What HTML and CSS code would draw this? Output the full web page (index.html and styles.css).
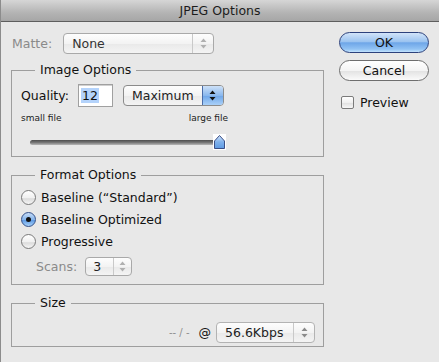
FILE: index.html
```html
<!DOCTYPE html>
<html lang="en">
<head>
  <meta charset="UTF-8">
  <title>JPEG Options</title>
  <link rel="stylesheet" href="styles.css">
</head>
<body>
  <div class="window">
    <div class="titlebar">JPEG Options</div>

    <div class="dialog">
      <div class="main">
        <div class="row matte-row">
          <span class="label muted">Matte:</span>
          <div class="popup popup-matte">
            <span class="popup-text">None</span>
            <span class="popup-arrows">
              <svg width="7" height="11" viewBox="0 0 7 11"><path d="M3.5 0.5 L6.5 4 L0.5 4 Z M0.5 7 L6.5 7 L3.5 10.5 Z" fill="#b0b0b0"/></svg>
            </span>
          </div>
        </div>

        <fieldset class="group group-image">
          <legend>Image Options</legend>
          <div class="row quality-row">
            <span class="label">Quality:</span>
            <div class="textfield"><span class="selected">12</span></div>
            <div class="popup popup-quality">
              <span class="popup-text">Maximum</span>
              <span class="popup-arrows active">
                <svg width="7" height="11" viewBox="0 0 7 11"><path d="M3.5 0.5 L6.5 4 L0.5 4 Z M0.5 7 L6.5 7 L3.5 10.5 Z" fill="#111"/></svg>
              </span>
            </div>
          </div>
          <div class="slider-labels">
            <span>small file</span>
            <span>large file</span>
          </div>
          <div class="slider">
            <div class="track"></div>
            <svg class="thumb" width="13" height="16" viewBox="0 0 13 16">
              <defs>
                <linearGradient id="thumbfill" x1="0" y1="0" x2="0" y2="1">
                  <stop offset="0" stop-color="#d4e6fb"/>
                  <stop offset="0.5" stop-color="#7fb1ec"/>
                  <stop offset="1" stop-color="#5f9be3"/>
                </linearGradient>
              </defs>
              <rect width="13" height="16" fill="#fff"/>
              <path d="M1.5 14.5 L1.5 7 L6.5 1.5 L11.5 7 L11.5 14.5 Z" fill="url(#thumbfill)" stroke="#3b4f86"/>
            </svg>
          </div>
        </fieldset>

        <fieldset class="group group-format">
          <legend>Format Options</legend>
          <label class="radio-row"><span class="radio"></span>Baseline (“Standard”)</label>
          <label class="radio-row"><span class="radio checked"></span>Baseline Optimized</label>
          <label class="radio-row"><span class="radio"></span>Progressive</label>
          <div class="row scans-row">
            <span class="label muted">Scans:</span>
            <div class="popup popup-scans">
              <span class="popup-text">3</span>
              <span class="popup-arrows">
                <svg width="7" height="11" viewBox="0 0 7 11"><path d="M3.5 0.5 L6.5 4 L0.5 4 Z M0.5 7 L6.5 7 L3.5 10.5 Z" fill="#b0b0b0"/></svg>
              </span>
            </div>
          </div>
        </fieldset>

        <fieldset class="group group-size">
          <legend>Size</legend>
          <div class="row size-row">
            <span class="size-value">-- / -</span>
            <span class="at">@</span>
            <div class="popup popup-speed">
              <span class="popup-text">56.6Kbps</span>
              <span class="popup-arrows">
                <svg width="7" height="11" viewBox="0 0 7 11"><path d="M3.5 0.5 L6.5 4 L0.5 4 Z M0.5 7 L6.5 7 L3.5 10.5 Z" fill="#8a8a8a"/></svg>
              </span>
            </div>
          </div>
        </fieldset>
      </div>

      <div class="side">
        <button class="btn btn-default">OK</button>
        <button class="btn">Cancel</button>
        <label class="check-row"><span class="checkbox"></span>Preview</label>
      </div>
    </div>
  </div>
</body>
</html>
```

FILE: styles.css
```css
body {
  margin: 0;
  background-color: #e8e8e8;
  font-family: "DejaVu Sans", "Lucida Grande", sans-serif;
  font-size: 12.5px;
  color: #111;
}

.window {
  width: 439px;
  height: 362px;
  border-left: 1px solid #8c8c8c;
  box-sizing: border-box;
  overflow: hidden;
}

.titlebar {
  height: 21px;
  line-height: 22px;
  text-align: center;
  font-size: 12.5px;
  color: #1c1c1c;
  background: linear-gradient(#d6d6d6, #b4b4b4 60%, #a6a6a6);
  border-bottom: 1px solid #5e5e5e;
}

.dialog {
  display: flex;
  padding: 10px 0 0 10px;
}

.main {
  width: 313px;
}

.side {
  width: 90px;
  margin-left: 15px;
  display: flex;
  flex-direction: column;
}

.row {
  display: flex;
  align-items: center;
}

.label {
  margin-right: 8px;
}

.muted {
  color: #8a8a8a;
}

/* popup menus */
.popup {
  display: flex;
  align-items: stretch;
  height: 19px;
  border: 1px solid #a9a9a9;
  border-radius: 4px;
  background: linear-gradient(#fdfdfd, #f3f3f3 50%, #e9e9e9 51%, #f4f4f4);
  box-sizing: content-box;
}

.popup-text {
  flex: 1;
  padding-left: 8px;
  line-height: 19px;
  color: #222;
}

.popup-arrows {
  width: 20px;
  border-left: 1px solid #c9c9c9;
  display: flex;
  align-items: center;
  justify-content: center;
  border-radius: 0 3px 3px 0;
}

.popup-arrows.active {
  background: linear-gradient(#cde1f8, #8ab8ee 50%, #6ea6e9 51%, #a9d0f8);
  border-left-color: #4a6ca8;
}

.matte-row {
  margin-top: 1px;
  height: 21px;
}

.matte-row .label {
  flex: 0 0 38px;
  margin-left: 1px;
  margin-right: 11px;
  white-space: nowrap;
}

.popup-matte {
  width: 149px;
}

.popup-matte .popup-text {
  color: #333;
}

/* group boxes */
.group {
  margin: 0;
  padding: 0 0 0 9px;
  border: 1px solid #9e9e9e;
  min-width: 0;
}

.group legend {
  margin-left: 14px;
  padding: 0 5px;
  font-size: 12.5px;
  line-height: 16px;
}

.group-image {
  margin-top: 8px;
  height: 87px;
  padding-top: 6px;
}

.quality-row {
  height: 23px;
}

.quality-row .label {
  margin-right: 9px;
}

.textfield {
  width: 31px;
  height: 21px;
  border: 1px solid #a0a0a0;
  background-color: #fff;
  box-shadow: inset 0 1px 0 #d0d0d0;
  padding: 0 0 0 2px;
  line-height: 21px;
  margin-right: 10px;
}

.selected {
  background-color: #b4d3fb;
  padding: 0 1px;
}

.popup-quality {
  width: 99px;
  border-color: #8b8b8b;
}

.slider-labels {
  display: flex;
  justify-content: space-between;
  width: 207px;
  margin-top: 6px;
  font-size: 9px;
  color: #222;
}

.slider {
  display: flex;
  align-items: center;
  width: 205px;
  margin-top: 11px;
  margin-left: 9px;
}

.track {
  width: 188px;
  height: 5px;
  border-radius: 3px;
  background: linear-gradient(#4d4d4d, #777 50%, #b8b8b8);
  margin-right: -5px;
}

.thumb {
  display: block;
}

.group-format {
  margin-top: 10px;
  height: 113px;
  padding-top: 3px;
}

.radio-row {
  display: flex;
  align-items: center;
  height: 22px;
}

.radio {
  width: 13px;
  height: 13px;
  border: 1px solid #7a7a7a;
  border-radius: 50%;
  background: linear-gradient(#ffffff, #f1f1f1 50%, #dcdcdc 60%, #f6f6f6);
  margin-right: 5px;
  position: relative;
}

.radio.checked {
  border-color: #33508a;
  background: linear-gradient(#c7ddf7, #86b5ec 50%, #5e9ae3 55%, #a6d0f9);
}

.radio.checked::after {
  content: "";
  position: absolute;
  left: 4px;
  top: 4px;
  width: 5px;
  height: 5px;
  border-radius: 50%;
  background-color: #111;
}

.scans-row {
  margin-top: 5px;
  padding-left: 15px;
}

.scans-row .label {
  margin-right: 8px;
}

.popup-scans {
  width: 45px;
  height: 17px;
}

.popup-scans .popup-text {
  line-height: 17px;
  padding-left: 7px;
}

.popup-scans .popup-arrows {
  width: 17px;
}

.group-size {
  margin-top: 10px;
  height: 39px;
  padding-top: 11px;
  padding-right: 8px;
}

.size-row {
  justify-content: flex-end;
}

.size-value {
  color: #8e8e8e;
  font-size: 10px;
  margin-right: 9px;
}

.at {
  margin-right: 5px;
}

.popup-speed {
  width: 97px;
  border-color: #b3b3b3;
}

/* buttons */
.btn {
  font-family: inherit;
  font-size: 12.5px;
  height: 21px;
  padding: 0;
  border: 1px solid #6e6e6e;
  border-radius: 11px;
  background: linear-gradient(#ffffff, #f4f4f4 50%, #e4e4e4 55%, #fafafa);
  color: #111;
  margin-bottom: 7px;
}

.btn-default {
  border-color: #2d427c;
  background: linear-gradient(#d2e4f9, #9cc4f0 45%, #6ea6e8 52%, #92c3f4 85%, #c3e3fd);
}

.check-row {
  display: flex;
  align-items: center;
  margin-top: 7px;
  margin-left: 2px;
}

.checkbox {
  width: 11px;
  height: 11px;
  border: 1px solid #7b7b7b;
  border-radius: 2px;
  background: linear-gradient(#ffffff, #f0f0f0 50%, #e1e1e1 55%, #f7f7f7);
  margin-right: 6px;
}
```
